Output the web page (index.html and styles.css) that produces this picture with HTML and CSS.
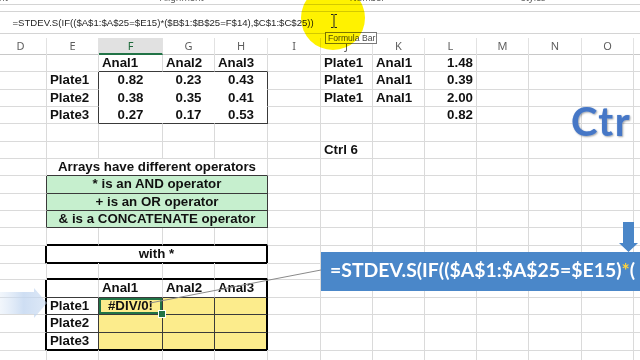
FILE: index.html
```html
<!DOCTYPE html>
<html>
<head>
<meta charset="utf-8">
<link rel="stylesheet" href="styles.css">
</head>
<body>
<div class="app">
  <div class="ribbon">
    <span class="rg1">Font</span><span class="rg2">Alignment</span><span class="rg3">Number</span><span class="rg4">Styles</span>
  </div>
  <div class="fbar">=STDEV.S(IF(($A$1:$A$25=$E15)*($B$1:$B$25=F$14),$C$1:$C$25))</div>
  <div class="colhead cols">
    <div>D</div><div>E</div><div class="hsel">F</div><div>G</div><div>H</div><div>I</div><div>J</div><div>K</div><div>L</div><div>M</div><div>N</div><div>O</div><div>P</div>
  </div>
  <div class="sheet">
    <div class="row cols">
      <div></div><div></div><div class="l bbd">Anal1</div><div class="l bbd">Anal2</div><div class="l bbd">Anal3</div><div></div><div class="l">Plate1</div><div class="l">Anal1</div><div class="r">1.48</div><div></div><div></div><div></div><div></div>
    </div>
    <div class="row cols">
      <div></div><div class="l brd">Plate1</div><div class="ctr w">0.82</div><div class="ctr w">0.23</div><div class="ctr w brd">0.43</div><div></div><div class="l">Plate1</div><div class="l">Anal1</div><div class="r">0.39</div><div></div><div></div><div></div><div></div>
    </div>
    <div class="row cols">
      <div></div><div class="l brd">Plate2</div><div class="ctr w">0.38</div><div class="ctr w">0.35</div><div class="ctr w brd">0.41</div><div></div><div class="l">Plate1</div><div class="l">Anal1</div><div class="r">2.00</div><div></div><div></div><div></div><div></div>
    </div>
    <div class="row cols">
      <div></div><div class="l brd">Plate3</div><div class="ctr w bbd">0.27</div><div class="ctr w bbd">0.17</div><div class="ctr w brd bbd">0.53</div><div></div><div></div><div></div><div class="r">0.82</div><div></div><div></div><div></div><div></div>
    </div>
    <div class="row cols">
      <div></div><div></div><div></div><div></div><div></div><div></div><div></div><div></div><div></div><div></div><div></div><div></div><div></div>
    </div>
    <div class="row cols">
      <div></div><div></div><div></div><div></div><div></div><div></div><div class="l">Ctrl 6</div><div></div><div></div><div></div><div></div><div></div><div></div>
    </div>
    <div class="row cols">
      <div></div><div class="m4 ctr bbd">Arrays have different operators</div><div></div><div></div><div></div><div></div><div></div><div></div><div></div><div></div>
    </div>
    <div class="row cols">
      <div class="brd"></div><div class="m4 ctr green">* is an AND operator</div><div></div><div></div><div></div><div></div><div></div><div></div><div></div><div></div>
    </div>
    <div class="row cols">
      <div class="brd"></div><div class="m4 ctr green">+ is an OR operator</div><div></div><div></div><div></div><div></div><div></div><div></div><div></div><div></div>
    </div>
    <div class="row cols">
      <div class="brd"></div><div class="m4 ctr green">&amp; is a CONCATENATE operator</div><div></div><div></div><div></div><div></div><div></div><div></div><div></div><div></div>
    </div>
    <div class="row cols">
      <div></div><div class="bb2"></div><div class="bb2"></div><div class="bb2"></div><div class="bb2"></div><div></div><div></div><div></div><div></div><div></div><div></div><div></div><div></div>
    </div>
    <div class="row cols">
      <div class="br2"></div><div class="m4 ctr br2 bb2">with *</div><div></div><div></div><div></div><div></div><div></div><div></div><div></div><div></div>
    </div>
    <div class="row cols">
      <div></div><div class="bb2"></div><div class="bb2"></div><div class="bb2"></div><div class="bb2"></div><div></div><div></div><div></div><div></div><div></div><div></div><div></div><div></div>
    </div>
    <div class="row cols">
      <div class="br2"></div><div class="bbd"></div><div class="l bbd">Anal1</div><div class="l bbd">Anal2</div><div class="l bbd br2">Anal3</div><div></div><div></div><div></div><div></div><div></div><div></div><div></div><div></div>
    </div>
    <div class="row cols">
      <div class="br2"></div><div class="l brd bbd">Plate1</div><div class="ctr y sel">#DIV/0!</div><div class="y"></div><div class="y br2"></div><div></div><div></div><div></div><div></div><div></div><div></div><div></div><div></div>
    </div>
    <div class="row cols">
      <div class="br2"></div><div class="l brd bbd">Plate2</div><div class="y"></div><div class="y"></div><div class="y br2"></div><div></div><div></div><div></div><div></div><div></div><div></div><div></div><div></div>
    </div>
    <div class="row cols">
      <div class="br2"></div><div class="l brd bb2">Plate3</div><div class="y bb2"></div><div class="y bb2"></div><div class="y br2 bb2"></div><div></div><div></div><div></div><div></div><div></div><div></div><div></div><div></div>
    </div>
    <div class="row cols">
      <div></div><div></div><div></div><div></div><div></div><div></div><div></div><div></div><div></div><div></div><div></div><div></div><div></div>
    </div>
  </div>

  <svg class="overlay" width="640" height="360" viewBox="0 0 640 360">
    <defs>
      <linearGradient id="ag" x1="0" y1="0" x2="1" y2="0">
        <stop offset="0" stop-color="#d3e2f5" stop-opacity="0.3"/>
        <stop offset="0.5" stop-color="#c2d6f0" stop-opacity="0.8"/>
        <stop offset="1" stop-color="#c2d6f0" stop-opacity="0.55"/>
      </linearGradient>
    </defs>
    <polygon points="0,292 34,292 34,288 47,303 34,318 34,314 0,314" fill="url(#ag)"/>
    <line x1="150" y1="303" x2="321" y2="270" stroke="#8a8a8a" stroke-width="1"/>
  </svg>

  <div class="callout">=STDEV.S(IF(($A$1:$A$25=$E15)<span class="star">*</span>(</div>

  <svg class="downarrow" width="22" height="32" viewBox="0 0 22 32">
    <polygon points="5,0 16,0 16,21 20,21 10.5,30 1,21 5,21" fill="#4a86c8"/>
  </svg>

  <div class="ctrl">Ctr</div>

  <div class="tooltip">Formula Bar</div>
  <div class="highlight"></div>
  <svg class="cursor" width="8" height="14" viewBox="0 0 8 14">
    <path d="M1 0.5h2.5M4.5 0.5h2.5M4 1v12M1 13.5h2.5M4.5 13.5h2.5" stroke="#222" stroke-width="1" fill="none"/>
  </svg>
</div>
</body>
</html>
```
FILE: styles.css
```css
* {
  box-sizing: border-box;
  margin: 0;
  padding: 0;
}

body {
  margin: 0;
  background: #ffffff;
  font-family: "Liberation Sans", Arial, sans-serif;
}

.app {
  position: relative;
  width: 640px;
  height: 360px;
  overflow: hidden;
  background: #ffffff;
}

/* ribbon group labels (cut off at top) */
.ribbon {
  height: 5px;
  border-bottom: 1px solid #d4d4d4;
  display: flex;
  overflow: hidden;
  font-family: "Noto Sans", sans-serif;
  font-size: 9px;
  color: #5a5a5a;
  white-space: nowrap;
}

.ribbon span {
  display: block;
  line-height: 9px;
  margin-top: -7px;
}

.rg1 { margin-left: -11px; }
.rg2 { margin-left: 152px; }
.rg3 { margin-left: 146px; }
.rg4 { margin-left: 136px; }

/* formula bar */
.fbar {
  margin-top: 6px;
  height: 23px;
  border-top: 1px solid #d4d4d4;
  border-bottom: 1px solid #d4d4d4;
  padding-left: 12.5px;
  font-family: "Liberation Sans", Arial, sans-serif;
  font-size: 9.6px;
  line-height: 21px;
  color: #262626;
  white-space: nowrap;
}

/* shared column template */
.cols {
  display: grid;
  grid-template-columns: 52px 52px 64px 52px 53px 53px 52px 52px 52px 52px 53px 52px 52px;
  margin-left: -5px;
  width: 691px;
}

.colhead {
  margin-top: 4px;
  height: 17px;
  border-bottom: 1px solid #c8c8c8;
  font-family: "Noto Sans", sans-serif;
  font-size: 11px;
  color: #5e5e5e;
}

.colhead > div {
  text-align: center;
  line-height: 16px;
  border-right: 1px solid #e2e2e2;
}

.colhead > .hsel {
  background: #e1e1e1;
  color: #1f6b3c;
  border-bottom: 2px solid #217346;
  line-height: 15px;
}

/* sheet */
.sheet {
  display: flex;
  flex-direction: column;
}

.row {
  height: 17.35px;
  font-family: "Liberation Sans", Arial, sans-serif;
  font-weight: bold;
  font-size: 13.3px;
  color: #111111;
}

.row > * {
  border-right: 1px solid #dadada;
  border-bottom: 1px solid #dadada;
  line-height: 16px;
  white-space: nowrap;
  overflow: visible;
  min-width: 0;
}

.l { padding-left: 3px; }
.r { text-align: right; padding-right: 3px; }
.ctr { text-align: center; }
.m4 { grid-column: span 4; }

.w {
  border-right-color: #ffffff;
  border-bottom-color: #ffffff;
}

.green {
  background: #c6efce;
  border-right-color: #3a3a3a;
  border-bottom-color: #3a3a3a;
}

.y {
  background: #fcec8c;
  border-right-color: #3a3a3a;
  border-bottom-color: #3a3a3a;
}

.brd { border-right-color: #3a3a3a; }
.bbd { border-bottom-color: #3a3a3a; }

.br2 { border-right: 2px solid #000000; }
.bb2 { border-bottom: 2px solid #000000; }

.sel {
  position: relative;
  box-shadow: inset 0 0 0 2px #217346;
}

.sel::after {
  content: "";
  position: absolute;
  right: -4px;
  bottom: -4px;
  width: 6px;
  height: 6px;
  background: #217346;
  border: 1px solid #ffffff;
}

/* overlays */
.overlay {
  position: absolute;
  left: 0;
  top: 0;
  pointer-events: none;
}

.callout {
  position: absolute;
  left: 321px;
  top: 252px;
  width: 330px;
  height: 39px;
  background: #4a87c9;
  color: #ffffff;
  font-family: Lato, "Open Sans", sans-serif;
  font-weight: bold;
  font-size: 19.4px;
  line-height: 36px;
  padding-left: 9px;
  white-space: nowrap;
}

.star {
  color: #ffd43b;
}

.downarrow {
  position: absolute;
  left: 618px;
  top: 222px;
}

.ctrl {
  position: absolute;
  left: 571px;
  top: 101px;
  font-family: Lato, "Open Sans", sans-serif;
  font-weight: bold;
  font-size: 40px;
  line-height: 40px;
  letter-spacing: 1.5px;
  color: #4677c6;
  text-shadow: 0 0 1px #a9c3ea, 1px 1px 2px rgba(0, 0, 0, 0.35);
}

.tooltip {
  position: absolute;
  left: 325px;
  top: 32px;
  width: 52px;
  height: 12px;
  background: #ffffff;
  border: 1px solid #7a7a7a;
  font-family: "Liberation Sans", Arial, sans-serif;
  font-size: 8.6px;
  line-height: 10px;
  color: #4a4a4a;
  padding-left: 2px;
  white-space: nowrap;
}

.highlight {
  position: absolute;
  left: 301px;
  top: -14px;
  width: 64px;
  height: 64px;
  border-radius: 50%;
  background: #fff200;
  mix-blend-mode: multiply;
}

.cursor {
  position: absolute;
  left: 330px;
  top: 14px;
}
```
